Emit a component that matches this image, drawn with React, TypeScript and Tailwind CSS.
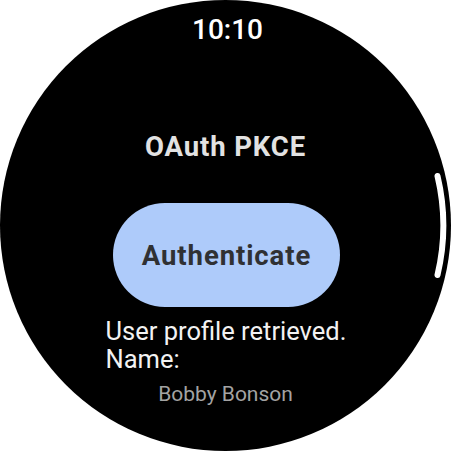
import React from "react";

export default function App() {
  return (
    <div className="w-[452px] h-[452px] bg-white" style={{ fontFamily: "Roboto, 'Noto Sans', sans-serif" }}>
      <div className="relative w-[451px] h-[451px] rounded-full bg-black flex flex-col items-center overflow-hidden">
        <div className="mt-[16px] text-[28px] leading-[28px] font-medium text-white ml-[4px]">10:10</div>
        <div className="mt-[89px] text-[27.5px] leading-[28px] font-bold tracking-[0.9px] text-[#e2e2e2]">OAuth PKCE</div>
        <div className="mt-[42px] w-[227px] h-[104px] rounded-full bg-[#aecbfa] flex items-center justify-center ml-[2px]">
          <span className="text-[27.5px] leading-[28px] font-bold tracking-[0.9px] text-[#303133] mt-[1px]">Authenticate</span>
        </div>
        <div className="mt-[10px] w-[242px] ml-[2px] text-[25.5px] leading-[28px] text-[#f2f2f2]">
          <div>User profile retrieved.</div>
          <div>Name:</div>
        </div>
        <div className="mt-[9px] text-[21px] leading-[24px] text-[#a3a3a3]">Bobby Bonson</div>
        <svg className="absolute left-0 top-0" width="451" height="451" viewBox="0 0 451 451">
          <path
            d="M 437.5 176 A 214 214 0 0 1 437.5 275"
            fill="none"
            stroke="#ffffff"
            strokeWidth="6"
            strokeLinecap="round"
          />
        </svg>
      </div>
    </div>
  );
}
